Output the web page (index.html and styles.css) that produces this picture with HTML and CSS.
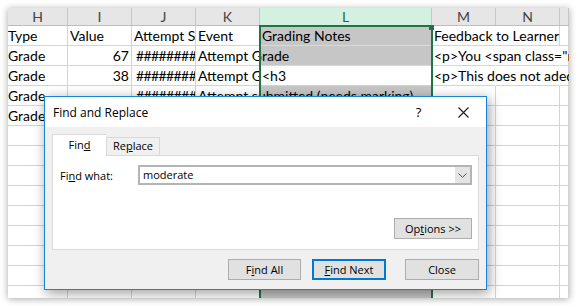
FILE: index.html
```html
<!DOCTYPE html>
<html>
	<head>
		<meta charset="UTF-8">
		<title>Find and Replace</title>
		<link rel="stylesheet" href="styles.css">
	</head>
	<body>
		<div class="page">
			<div class="sheet">
				<div class="colhead">
					<div class="ch h">H</div>
					<div class="ch i">I</div>
					<div class="ch j">J</div>
					<div class="ch k">K</div>
					<div class="ch l on">L</div>
					<div class="ch m">M</div>
					<div class="ch n">N</div>
					<div class="ch o"></div>
				</div>
				<div class="row">
					<div class="c h">Type</div>
					<div class="c i">Value</div>
					<div class="c j">Attempt Start</div>
					<div class="c k">Event</div>
					<div class="c l gray">Grading Notes</div>
					<div class="c m open spill"><span>Feedback to Learner</span></div>
					<div class="c n"></div>
					<div class="c o"></div>
				</div>
				<div class="row">
					<div class="c h">Grade</div>
					<div class="c i num">67</div>
					<div class="c j hash">########</div>
					<div class="c k spill"><span>Attempt Grade</span></div>
					<div class="c l gray"></div>
					<div class="c m open spill"><span>&lt;p&gt;You &lt;span class="moderate"&gt;</span></div>
					<div class="c n open"></div>
					<div class="c o"></div>
				</div>
				<div class="row">
					<div class="c h">Grade</div>
					<div class="c i num">38</div>
					<div class="c j hash">########</div>
					<div class="c k">Attempt Graded</div>
					<div class="c l">&lt;h3</div>
					<div class="c m open spill"><span>&lt;p&gt;This does not adequately</span></div>
					<div class="c n open"></div>
					<div class="c o"></div>
				</div>
				<div class="row">
					<div class="c h">Grade</div>
					<div class="c i"></div>
					<div class="c j hash">########</div>
					<div class="c k spill"><span>Attempt submitted (needs marking)</span></div>
					<div class="c l gray"></div>
					<div class="c m"></div>
					<div class="c n"></div>
					<div class="c o"></div>
				</div>
				<div class="row">
					<div class="c h">Grade</div>
					<div class="c i"></div>
					<div class="c j hash">########</div>
					<div class="c k"></div>
					<div class="c l gray"></div>
					<div class="c m"></div>
					<div class="c n"></div>
					<div class="c o"></div>
				</div>
				<div class="row"><div class="c h"></div><div class="c i"></div><div class="c j"></div><div class="c k"></div><div class="c l gray"></div><div class="c m"></div><div class="c n"></div><div class="c o"></div></div>
				<div class="row"><div class="c h"></div><div class="c i"></div><div class="c j"></div><div class="c k"></div><div class="c l gray"></div><div class="c m"></div><div class="c n"></div><div class="c o"></div></div>
				<div class="row"><div class="c h"></div><div class="c i"></div><div class="c j"></div><div class="c k"></div><div class="c l gray"></div><div class="c m"></div><div class="c n"></div><div class="c o"></div></div>
				<div class="row"><div class="c h"></div><div class="c i"></div><div class="c j"></div><div class="c k"></div><div class="c l gray"></div><div class="c m"></div><div class="c n"></div><div class="c o"></div></div>
				<div class="row"><div class="c h"></div><div class="c i"></div><div class="c j"></div><div class="c k"></div><div class="c l gray"></div><div class="c m"></div><div class="c n"></div><div class="c o"></div></div>
				<div class="row"><div class="c h"></div><div class="c i"></div><div class="c j"></div><div class="c k"></div><div class="c l gray"></div><div class="c m"></div><div class="c n"></div><div class="c o"></div></div>
				<div class="row"><div class="c h"></div><div class="c i"></div><div class="c j"></div><div class="c k"></div><div class="c l gray"></div><div class="c m"></div><div class="c n"></div><div class="c o"></div></div>
				<div class="row"><div class="c h"></div><div class="c i"></div><div class="c j"></div><div class="c k"></div><div class="c l gray"></div><div class="c m"></div><div class="c n"></div><div class="c o"></div></div>
				<div class="row"><div class="c h"></div><div class="c i"></div><div class="c j"></div><div class="c k"></div><div class="c l gray"></div><div class="c m"></div><div class="c n"></div><div class="c o"></div></div>

				<!-- selected column L -->
				<div class="sel"></div>

				<!-- dialog -->
				<div class="dlg">
					<div class="dlg-title">
						<div class="dlg-name">Find and Replace</div>
						<div class="tbtn">?</div>
						<div class="tbtn">
							<svg width="11" height="11" viewBox="0 0 11 11"><path d="M0.5 0.5L10.5 10.5M10.5 0.5L0.5 10.5" stroke="#1a1a1a" stroke-width="1.1" fill="none"/></svg>
						</div>
					</div>
					<div class="dlg-body">
						<div class="tabs">
							<div class="tab on">Fin<u>d</u></div>
							<div class="tab">Re<u>p</u>lace</div>
						</div>
						<div class="panel">
							<div class="field">
								<div class="label">Fi<u>n</u>d what:</div>
								<div class="combo">
									<div class="combo-text">moderate</div>
									<div class="combo-btn">
										<svg width="9" height="5" viewBox="0 0 9 5"><path d="M0.5 0.5L4.5 4.3L8.5 0.5" stroke="#555" stroke-width="1" fill="none"/></svg>
									</div>
								</div>
							</div>
							<div class="btn opt">Op<u>t</u>ions &gt;&gt;</div>
						</div>
						<div class="actions">
							<div class="btn find-all">F<u>i</u>nd All</div>
							<div class="btn find-next"><u>F</u>ind Next</div>
							<div class="btn close">Close</div>
						</div>
					</div>
				</div>
			</div>
		</div>
	</body>
</html>
```
FILE: styles.css
```css
*{
	margin: 0;
	padding: 0;
	box-sizing: border-box;
}
body{
	background: #fff;
}
.page{
	padding: 8px;
}
.sheet{
	position: relative;
	width: 561px;
	height: 290px;
	overflow: hidden;
	background: #fff;
	box-shadow: 0 1px 7px rgba(0,0,0,0.35);
	font-family: Lato, "Liberation Sans", sans-serif;
	font-size: 14px;
	color: #000;
}
/* column letters */
.colhead{
	display: flex;
	height: 18px;
	background: #e6e6e6;
	border-bottom: 1px solid #bdbdbd;
}
.ch{
	height: 100%;
	border-right: 1px solid #c8c8c8;
	text-align: center;
	font-size: 14px;
	line-height: 17px;
	color: #444;
}
.ch.on{
	background: #d3f0e0;
	color: #1e6b41;
}
/* cells */
.row{
	display: flex;
	height: 20px;
}
.c{
	height: 20px;
	border-right: 1px solid #d4d4d4;
	border-bottom: 1px solid #d4d4d4;
	padding: 0 2px;
	line-height: 20px;
	white-space: nowrap;
	overflow: hidden;
}
.h{
	width: 60px;
	flex: none;
}
.c.h{
	padding-left: 0;
}
.i, .j, .k, .m, .n{
	width: 64px;
	flex: none;
}
.l{
	width: 172px;
	flex: none;
}
.o{
	width: 9px;
	flex: none;
}
.num{
	text-align: right;
}
.hash{
	letter-spacing: -0.6px;
	padding-left: 4px;
}
.gray{
	background: #c6c6c6;
	border-bottom-color: #d9d9d9;
}
.open{
	border-right-color: transparent;
}
.spill{
	overflow: visible;
}
.spill span{
	position: relative;
	z-index: 1;
}
/* selection outline */
.sel{
	position: absolute;
	left: 251px;
	top: 17px;
	width: 174px;
	height: 300px;
	border: 2px solid #217346;
	border-bottom: none;
	z-index: 2;
}
.sel::after{
	content: "";
	position: absolute;
	right: -3px;
	top: -2px;
	width: 5px;
	height: 5px;
	background: #217346;
}
/* find and replace dialog */
.dlg{
	position: absolute;
	left: 36px;
	top: 88px;
	width: 443px;
	height: 194px;
	border: 1px solid #1883d7;
	background: #f0f0f0;
	box-shadow: 2px 3px 12px rgba(0,0,0,0.4);
	z-index: 3;
	font-family: "Open Sans", "Noto Sans", sans-serif;
	font-size: 11px;
	color: #000;
}
.dlg-title{
	height: 30px;
	background: #fff;
	display: flex;
	align-items: center;
	padding-left: 8px;
}
.dlg-name{
	flex: 1;
	font-size: 12px;
}
.tbtn{
	width: 45px;
	height: 30px;
	display: flex;
	align-items: center;
	justify-content: center;
	font-size: 13px;
}
.dlg-body{
	padding: 7px 7px 0 7px;
}
.tabs{
	display: flex;
	height: 21px;
}
.tab{
	width: 54px;
	height: 18px;
	margin-top: 3px;
	border: 1px solid #d9d9d9;
	border-bottom: none;
	text-align: center;
	line-height: 16px;
}
.tab.on{
	height: 22px;
	margin-top: 0;
	background: #fff;
	line-height: 20px;
	border-right: none;
	position: relative;
	z-index: 1;
}
.panel{
	height: 95px;
	background: #fff;
	border: 1px solid #d9d9d9;
	padding: 9px 6px 10px 7px;
	display: flex;
	flex-direction: column;
}
.field{
	display: flex;
	align-items: center;
	height: 20px;
}
.label{
	width: 78px;
}
.combo{
	flex: 1;
	height: 20px;
	display: flex;
	border: 2px solid #b4b4b4;
	background: #fff;
}
.combo-text{
	flex: 1;
	padding-left: 3px;
	line-height: 16px;
}
.combo-btn{
	width: 15px;
	background: #e5e5e5;
	display: flex;
	align-items: center;
	justify-content: center;
}
.btn{
	height: 21px;
	background: #e1e1e1;
	border: 1px solid #adadad;
	text-align: center;
	line-height: 19px;
}
.opt{
	width: 78px;
	margin-top: auto;
	align-self: flex-end;
}
.actions{
	display: flex;
	justify-content: flex-end;
	margin-top: 9px;
}
.find-all{
	width: 73px;
	margin-right: 11px;
}
.find-next{
	width: 74px;
	margin-right: 19px;
	border: 2px solid #0078d7;
	line-height: 17px;
}
.close{
	width: 74px;
}
```
